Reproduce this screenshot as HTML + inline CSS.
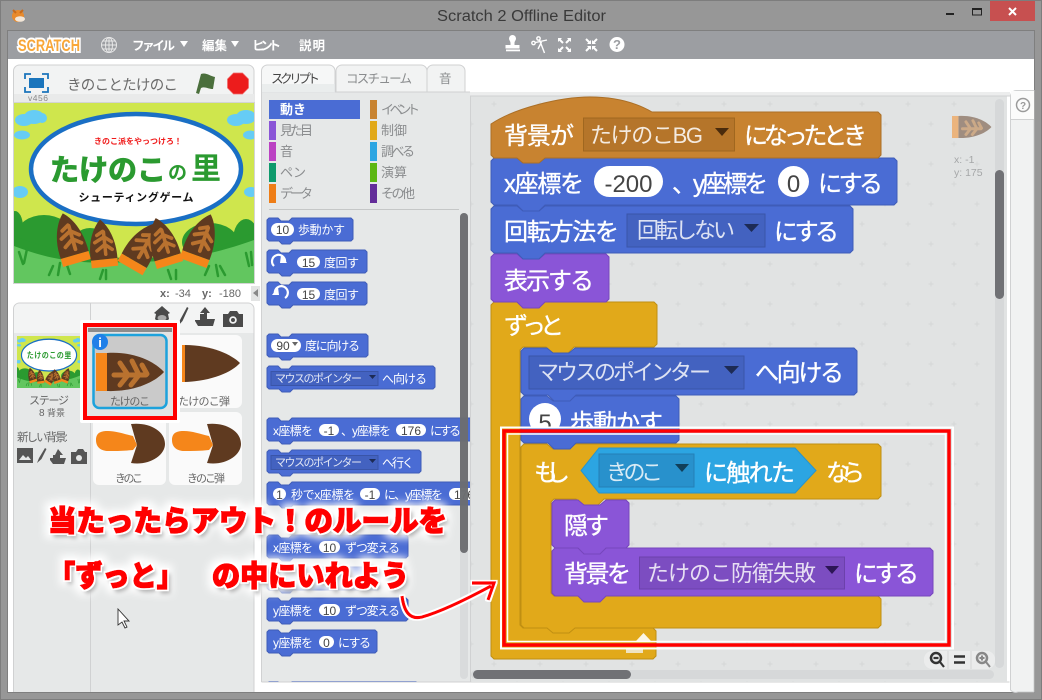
<!DOCTYPE html>
<html lang="ja"><head><meta charset="utf-8"><title>Scratch 2 Offline Editor</title>
<style>
html,body{margin:0;padding:0;background:#979797;width:1042px;height:700px;overflow:hidden}
svg{display:block;position:absolute;left:0;top:0}
text{font-family:"Liberation Sans","Noto Sans CJK JP",sans-serif}
.w{fill:#fff;font-size:24px;stroke:#fff;stroke-width:.35px}
.d{fill:#fff;font-size:22px;opacity:.82}
.n{fill:#444;font-size:24px;text-anchor:middle}
.p{fill:#fff;font-size:12px}
.pn{fill:#444;font-size:12px;text-anchor:middle}
.c{fill:#8a8c8e;font-size:13px}
.l{fill:#666;font-size:11px;text-anchor:middle}
.m{fill:#fff;font-size:12.5px;font-weight:bold}
.big{fill:#f00;font-size:29px;font-weight:900;stroke:#f00;stroke-width:1.4px;filter:url(#glow)}
.mo{fill:#4a6cd4;stroke:#3f5cb8;stroke-width:1}
.lo{fill:#8a55d7;stroke:#7646bc;stroke-width:1}
.co{fill:#e1a91a;stroke:#c08f12;stroke-width:1}
.ev{fill:#c88330;stroke:#ab6f26;stroke-width:1}
</style></head><body>
<svg width="1042" height="700" viewBox="0 0 1042 700" xmlns="http://www.w3.org/2000/svg">
<defs>
<pattern id="plus" x="494" y="104" width="46" height="40" patternUnits="userSpaceOnUse">
<path d="M0 -2.5V2.5M-2.5 0H2.5M46 -2.5V2.5M43.5 0H48.500M23 17.500V22.500M20.500 20H25.500M0 37.500V42.500M-2.500 40H2.500M46 37.500V42.500M43.500 40H48.500" stroke="#d5d7d7" stroke-width="1" fill="none"/>
</pattern>
<filter id="glow" x="-10%" y="-80%" width="120%" height="260%">
<feMorphology in="SourceAlpha" operator="dilate" radius="5" result="a"/>
<feGaussianBlur in="a" stdDeviation="4" result="b"/>
<feFlood flood-color="#fff" flood-opacity=".97"/><feComposite in2="b" operator="in" result="c"/>
<feOffset in="SourceAlpha" dx="3" dy="4" result="so"/>
<feGaussianBlur in="so" stdDeviation="2" result="sb"/>
<feFlood flood-color="#777" flood-opacity=".7"/><feComposite in2="sb" operator="in" result="sc"/>
<feMorphology in="SourceAlpha" operator="dilate" radius="1.6" result="e"/>
<feFlood flood-color="#fff"/><feComposite in2="e" operator="in" result="f"/>
<feMerge><feMergeNode in="c"/><feMergeNode in="sc"/><feMergeNode in="f"/><feMergeNode in="SourceGraphic"/></feMerge>
</filter>
<filter id="ws" x="-10%" y="-30%" width="120%" height="160%">
<feMorphology in="SourceAlpha" operator="dilate" radius="1.5" result="e"/>
<feFlood flood-color="#fff"/><feComposite in2="e" operator="in" result="f"/>
<feMerge><feMergeNode in="f"/><feMergeNode in="SourceGraphic"/></feMerge>
</filter>
<clipPath id="stg"><rect x="14" y="103" width="240" height="180"/></clipPath>
<clipPath id="pal"><rect x="262" y="212" width="208" height="470"/></clipPath>
<clipPath id="cut5"><rect x="521" y="396" width="160" height="31"/></clipPath>
<g id="tk">
<path d="M11 -19C40 -21 60 -9 68 0C60 9 40 20 11 19Z" fill="#5f3a20"/>
<path d="M0 -19H11V19H0Z" fill="#f5861a"/>
<path d="M18 3H50M24 -9L32 3L24 13M36 -11L43 3L35 13M46 -7L51 2" stroke="#b9722f" stroke-width="5" fill="none" stroke-linecap="round" stroke-linejoin="round"/>
</g>
<g id="scene">
<rect x="14" y="103" width="240" height="180" fill="#cfe64d"/>
<g fill="#66ccf5">
<ellipse cx="24" cy="120" rx="9" ry="6"/><ellipse cx="34" cy="117" rx="10" ry="7"/><ellipse cx="42" cy="118" rx="5" ry="5"/>
<ellipse cx="22" cy="135" rx="8" ry="4.500"/>
<ellipse cx="236" cy="120" rx="9" ry="6"/><ellipse cx="246" cy="117" rx="10" ry="7"/>
<ellipse cx="250" cy="135" rx="7" ry="4.500"/>
<ellipse cx="20" cy="192" rx="8" ry="6"/><ellipse cx="251" cy="192" rx="7" ry="5"/>
</g>
<g fill="#2b9a30">
<ellipse cx="15" cy="227" rx="8" ry="16"/><ellipse cx="44" cy="234" rx="27" ry="19"/><ellipse cx="90" cy="246" rx="19" ry="18"/>
<ellipse cx="210" cy="242" rx="28" ry="19"/><ellipse cx="246" cy="240" rx="13" ry="21"/>
<path d="M14 236Q134 290 254 232V283H14Z"/>
</g>
<path d="M14 236Q120 278 254 240V283H14Z" fill="#2b9a30"/>
<path d="M14 246C70 268 110 262 134 262C170 262 210 256 254 240V283H14Z" fill="#62c65f"/>
<path d="M19 252l4 12M27 249l-3 14M53 266l-4 9M60 263l-2 12M67 265l3 9M103 270l-3 9M106 270v9M168 270l3 9M176 270v9M209 266l-4 9M216 265l2 11M220 266l5 9M246 253l3 13M251 252l1 13" stroke="#2b9a30" stroke-width="2.500" stroke-linecap="round" fill="none"/>
<ellipse cx="136" cy="169" rx="105" ry="55" fill="#fff" stroke="#1a6fc4" stroke-width="4.500"/>
<use href="#tk" transform="translate(77,263) rotate(-106) scale(.76)"/>
<use href="#tk" transform="translate(105,267) rotate(-96) scale(.7)"/>
<use href="#tk" transform="translate(130,268) rotate(-60) scale(.76)"/>
<use href="#tk" transform="translate(170,265) rotate(-107) scale(.72)"/>
<use href="#tk" transform="translate(193,263) rotate(-70) scale(.76)"/>
</g>
</defs>

<!-- window -->
<rect width="1042" height="700" fill="#979797"/>
<rect x="0.500" y="0.500" width="1041" height="699" fill="none" stroke="#7d7d7d"/>
<text x="437" y="21" font-size="15.500" fill="#3a3a3a" textLength="169" lengthAdjust="spacingAndGlyphs">Scratch 2 Offline Editor</text>
<circle cx="18" cy="16" r="6" fill="#e88a2c"/><path d="M13 10l3 3M23 10l-3 3" stroke="#c86a1a" stroke-width="2"/><ellipse cx="20" cy="19" rx="5" ry="2.800" fill="#f3e7d8"/>
<rect x="946" y="13" width="8" height="2" fill="#222"/>
<rect x="972.500" y="8.500" width="9" height="6.500" fill="none" stroke="#222"/><rect x="972" y="8" width="10" height="2" fill="#222"/>
<rect x="990" y="1" width="45" height="20" fill="#c75050"/>
<path d="M1009 8l7 7M1016 8l-7 7" stroke="#fff" stroke-width="2"/>

<!-- content -->
<rect x="8" y="31" width="1026" height="661" fill="#fff"/>
<rect x="7.500" y="30.500" width="1027" height="662" fill="none" stroke="#7f7f7f"/>
<rect x="8" y="31" width="1026" height="28" fill="#9c9ea2"/>
<text x="18" y="51" font-size="17" font-weight="bold" fill="#f9a738" stroke="#fff" stroke-width="4" paint-order="stroke" textLength="62" lengthAdjust="spacingAndGlyphs">SCRATCH</text>
<g fill="none" stroke="#e8e8e8" stroke-width="1"><circle cx="109" cy="45" r="7.500"/><ellipse cx="109" cy="45" rx="3.500" ry="7.500"/><path d="M101.500 45h15M102.500 41h13M102.500 49h13M109 37.500v15"/></g>
<text class="m" x="132" y="50" textLength="43">ファイル</text><path d="M180 41h8l-4 6z" fill="#fff"/>
<text class="m" x="202" y="50" textLength="25">編集</text><path d="M231 41h8l-4 6z" fill="#fff"/>
<text class="m" x="252" y="50" textLength="29">ヒント</text>
<text class="m" x="299" y="50" textLength="26">説明</text>
<!-- header tools -->
<g fill="#fff">
<path d="M509 38.500a3.500 3.500 0 0 1 7 0c0 2-1.500 2.500-1.500 4.500v2h5v3.500h-14V45h5v-2c0-2-1.500-2.500-1.500-4.500z"/><rect x="506" y="49.500" width="14" height="1.800"/>
</g>
<g stroke="#fff" fill="none" stroke-width="1.400"><path d="M535.500 42.500L547 40M539.500 40L544.500 53M541.500 42L538 49"/><circle cx="533.500" cy="43" r="1.700"/><circle cx="538.500" cy="38.500" r="1.700"/></g>
<g stroke="#fff" stroke-width="2" fill="#fff">
<path d="M559 39l4 4M570 39l-4 4M559 51l4-4M570 51l-4-4" fill="none"/><path d="M558 38h4l-4 4zM571 38h-4l4 4zM558 52h4l-4-4zM571 52h-4l4-4z" stroke="none"/>
<path d="M586 39l4 4M597 39l-4 4M586 51l4-4M597 51l-4-4" fill="none"/><path d="M591 44h-4l4-4zM592 44h4l-4-4zM591 46h-4l4 4zM592 46h4l-4 4z" stroke="none"/>
</g>
<circle cx="617" cy="44.500" r="7.500" fill="#fff"/><text x="617" y="49" font-size="13" font-weight="bold" fill="#9c9ea2" text-anchor="middle">?</text>

<!-- stage header -->
<path d="M13.500 103V71a6 6 0 0 1 6-6H248a6 6 0 0 1 6 6V103" fill="#f2f3f3" stroke="#d0d1d2"/>
<rect x="14" y="94" width="240" height="9" fill="#e9eaea"/>
<rect x="29" y="78" width="15" height="10" fill="#1b75bc"/>
<path d="M31 74h-6v5M42 74h6v5M31 92h-6v-5M42 92h6v-5" fill="none" stroke="#1b75bc" stroke-width="1.800"/>
<text x="28" y="101" font-size="8.500" fill="#888" textLength="20">v456</text>
<text x="67" y="90" font-size="14.500" fill="#6b6b6b" textLength="111">きのことたけのこ</text>
<path d="M196 93l5-19c5-2 9 2 14 3l-2 12c-5 0-8-3-12-1l-2 6z" fill="#4b6f3c"/>
<path d="M233.500 73h9l6 6v9l-6 6h-9l-6-6v-9z" fill="#ec1c1c" stroke="#f06a6a" stroke-width=".7"/>
<use href="#scene" clip-path="url(#stg)"/>
<text x="138" y="144" font-size="8" font-weight="bold" fill="#f01818" text-anchor="middle" textLength="88">きのこ派をやっつけろ！</text>
<text x="50" y="180" font-size="29" font-weight="bold" fill="#2b9a30" stroke="#2b9a30" stroke-width="1" textLength="116" lengthAdjust="spacingAndGlyphs">たけのこ</text>
<text x="168" y="179" font-size="19" font-weight="bold" fill="#2b9a30">の</text>
<text x="191" y="179" font-size="30" font-weight="bold" fill="#2b9a30">里</text>
<text x="136" y="201" font-size="11" font-weight="bold" fill="#111" text-anchor="middle" textLength="115">シューティングゲーム</text>
<rect x="13.500" y="102.500" width="241" height="181" fill="none" stroke="#d3d4d4"/>
<text x="160" y="297" font-size="11" font-weight="bold" fill="#666">x:</text><text x="175" y="297" font-size="11" fill="#666">-34</text>
<text x="202" y="297" font-size="11" font-weight="bold" fill="#666">y:</text><text x="219" y="297" font-size="11" fill="#666">-180</text>
<rect x="251" y="286" width="9" height="15" fill="#e3e4e4"/><path d="M258 289v8l-5-4z" fill="#888"/>

<!-- sprites panel -->
<path d="M13.500 692V309a6 6 0 0 1 6-6H248a6 6 0 0 1 6 6V692" fill="#e6e8e8" stroke="#d0d1d2"/>
<path d="M14 333V309a5.500 5.500 0 0 1 5.500-5.500H248a5.500 5.500 0 0 1 5.500 5.500V333Z" fill="#f3f4f4"/>
<rect x="90" y="303" width="1" height="389" fill="#d0d1d2"/>
<g fill="#4a4a4a">
<path d="M162 306l8 7-2 1 1 5-4 4h-6l-4-4 1-5-2-1z"/><ellipse cx="162" cy="318" rx="4.500" ry="3" fill="#a9a9a9"/>
<path d="M178 326l2-6 7-13 1.500 1-6 13z"/>
<path d="M197 320h3v-6h4v-1h-4l5-6 5 6h-3v6h8l-2 7h-15l-3-5v-1z"/>
<path d="M223 314h5l2-3h7l2 3h4v13h-20z"/><circle cx="233" cy="320" r="3.800" fill="#f3f4f4"/><circle cx="233" cy="320" r="2"/>
</g>
<!-- stage thumb -->
<g transform="translate(17,336)">
<rect width="63" height="52" fill="#fff"/>
<g transform="scale(.2625 .289) translate(-14 -103)"><use href="#scene" clip-path="url(#stg)"/>
<text x="51" y="179" font-size="27" font-weight="bold" fill="#2b9a30" textLength="170">たけのこの里</text></g>
</g>
<text class="l" x="49" y="404" fill="#666" font-size="12" textLength="40">ステージ</text>
<text x="39" y="416" font-size="10" fill="#666">8</text><text x="47" y="416" font-size="9" fill="#666" textLength="18" lengthAdjust="spacingAndGlyphs">背景</text>
<text x="17" y="441" font-size="11.500" fill="#666" textLength="51">新しい背景:</text>
<g fill="#555">
<path d="M17 448h16v15H17zM19 460l4-5 3 3 2-2 3 4z" fill-rule="evenodd"/>
<path d="M37 463l2-5 6-10 1.500 1-5 10z"/>
<path d="M50 458h3v-3h2l3-6 5 6h-3v3h6l-2 6H53l-3-4z"/>
<path d="M71 452h5l2-3h5l2 3h2v12H71z"/><circle cx="79" cy="458" r="3" fill="#e6e8e8"/>
</g>
<!-- sprite thumbs -->
<rect x="169" y="335" width="73" height="73" rx="6" fill="#fafafa"/>
<rect x="93" y="412" width="73" height="73" rx="6" fill="#fafafa"/>
<rect x="169" y="412" width="73" height="73" rx="6" fill="#fafafa"/>
<path d="M185 345C212 345 232 355 240 363C232 372 212 381 185 382Z" fill="#5f3a20"/><rect x="182" y="345" width="3" height="37" fill="#f5861a"/>
<text class="l" x="204" y="405" font-size="12" textLength="52">たけのこ弾</text>
<g id="ki"><path d="M96 440C96 432 102 431 108 431C116 431 124 434 133 436L137 445L133 450C124 451 116 451 108 451C102 451 96 448 96 440Z" fill="#f5861a"/>
<path d="M131 424C148 422 165 430 165 444C165 456 148 466 131 463L137 445Z" fill="#5f3a20"/></g>
<use href="#ki" x="76"/>
<text class="l" x="129" y="482" font-size="12" textLength="28">きのこ</text>
<text class="l" x="206" y="482" font-size="12" textLength="38">きのこ弾</text>
<!-- highlighted sprite -->
<rect x="80" y="320" width="100" height="103" fill="#fff" rx="2"/>
<rect x="85" y="325" width="90" height="93" fill="#e2e3e3" stroke="#f00" stroke-width="4"/>
<rect x="88" y="328" width="84" height="4" fill="#8c8c8c"/>
<rect x="93.500" y="335" width="73" height="73" rx="6" fill="#cacaca" stroke="#1da2dc" stroke-width="2.500"/>
<use href="#tk" transform="translate(96,372)"/>
<circle cx="100" cy="342" r="8" fill="#1f7fe8"/><text x="100" y="347" font-size="13" font-weight="bold" fill="#fff" text-anchor="middle">i</text>
<text class="l" x="130" y="405" font-size="12" textLength="40">たけのこ</text>

<!-- tabs and palette -->
<rect x="261" y="92" width="210" height="590" fill="#e6e8e8"/>
<path d="M261.500 682V92H470" fill="none" stroke="#d0d1d2"/>
<rect x="261.500" y="681.500" width="748" height="1" fill="#d0d1d2"/>
<path d="M336 92V71a6 6 0 0 1 6-6h79a6 6 0 0 1 6 6V92Z" fill="#f2f3f3" stroke="#d0d1d2"/>
<path d="M427 92V71a6 6 0 0 1 6-6h26a6 6 0 0 1 6 6V92Z" fill="#f2f3f3" stroke="#d0d1d2"/>
<path d="M261.500 92V71a6 6 0 0 1 6-6H329a6 6 0 0 1 6 6V92" fill="#f6f7f7" stroke="#d0d1d2"/>
<rect x="262" y="84" width="73" height="12" fill="#e6e8e8" opacity=".7"/>
<text x="271" y="83" font-size="12.500" fill="#444" textLength="49">スクリプト</text>
<text x="346" y="83" font-size="12.500" fill="#8a8c8e" textLength="66">コスチューム</text>
<text x="439" y="83" font-size="12.500" fill="#8a8c8e">音</text>
<rect x="269" y="100" width="91" height="19" fill="#4a6cd4"/><text x="280" y="114" font-size="13" font-weight="bold" fill="#fff">動き</text>
<rect x="269" y="121" width="7" height="19" fill="#8a55d7"/><text class="c" x="280" y="135" textLength="33">見た目</text>
<rect x="269" y="142" width="7" height="19" fill="#bb42c3"/><text class="c" x="280" y="156">音</text>
<rect x="269" y="163" width="7" height="19" fill="#0e9a6c"/><text class="c" x="280" y="177">ペン</text>
<rect x="269" y="184" width="7" height="19" fill="#ee7d16"/><text class="c" x="280" y="198" textLength="33">データ</text>
<rect x="370" y="100" width="7" height="19" fill="#c88330"/><text class="c" x="381" y="114" textLength="39">イベント</text>
<rect x="370" y="121" width="7" height="19" fill="#e1a91a"/><text class="c" x="381" y="135">制御</text>
<rect x="370" y="142" width="7" height="19" fill="#2ca5e2"/><text class="c" x="381" y="156" textLength="34">調べる</text>
<rect x="370" y="163" width="7" height="19" fill="#5cb712"/><text class="c" x="381" y="177">演算</text>
<rect x="370" y="184" width="7" height="19" fill="#632d99"/><text class="c" x="381" y="198" textLength="34">その他</text>
<rect x="269" y="209" width="190" height="1" fill="#c5c7c7"/>

<g clip-path="url(#pal)">
<g transform="translate(0,218)"><path class="mo" d="M267 2l2-2h9l3 3h8l3-3H351l2 2V21l-2 2H293l-3 3h-8l-3-3H269l-2-2Z"/>
<rect x="271" y="5" width="23" height="13" rx="6.500" fill="#fff"/><text class="pn" x="282.500" y="16">10</text><text class="p" x="298" y="16" textLength="47">歩動かす</text></g>
<g transform="translate(0,250)"><path class="mo" d="M267 2l2-2h9l3 3h8l3-3H365l2 2V21l-2 2H293l-3 3h-8l-3-3H269l-2-2Z"/>
<path d="M274 16a6.500 6.500 0 1 1 11-4" fill="none" stroke="#fff" stroke-width="2.200"/><path d="M281 5l6 8-7 0z" fill="#fff"/>
<rect x="297" y="6" width="23" height="12" rx="6" fill="#fff"/><text class="pn" x="308.500" y="17">15</text><text class="p" x="324" y="17" textLength="35">度回す</text></g>
<g transform="translate(0,282)"><path class="mo" d="M267 2l2-2h9l3 3h8l3-3H365l2 2V21l-2 2H293l-3 3h-8l-3-3H269l-2-2Z"/>
<path d="M285 16a6.500 6.500 0 1 0-10-4" fill="none" stroke="#fff" stroke-width="2.200"/><path d="M278 5l-6 8 7 0z" fill="#fff"/>
<rect x="297" y="6" width="23" height="12" rx="6" fill="#fff"/><text class="pn" x="308.500" y="17">15</text><text class="p" x="324" y="17" textLength="35">度回す</text></g>
<g transform="translate(0,334)"><path class="mo" d="M267 2l2-2h9l3 3h8l3-3H366l2 2V21l-2 2H293l-3 3h-8l-3-3H269l-2-2Z"/>
<rect x="271" y="5" width="30" height="13" rx="6.500" fill="#fff"/><text class="pn" x="283" y="16">90</text><path d="M292 8h6l-3 4z" fill="#666"/><text class="p" x="305" y="16" textLength="55">度に向ける</text></g>
<g transform="translate(0,366)"><path class="mo" d="M267 2l2-2h9l3 3h8l3-3H433l2 2V21l-2 2H293l-3 3h-8l-3-3H269l-2-2Z"/>
<rect x="271" y="5.500" width="107" height="14" fill="#4362c0" stroke="#3a55a8"/><text x="275" y="16" font-size="11" fill="#fff" opacity=".85" textLength="87">マウスのポインター</text><path d="M369 9h7l-3.500 4z" fill="#1d2b55"/><text class="p" x="382" y="17" textLength="45">へ向ける</text></g>
<g transform="translate(0,418)"><path class="mo" d="M267 2l2-2h9l3 3h8l3-3H500V23H293l-3 3h-8l-3-3H269l-2-2Z"/>
<text class="p" x="273" y="17" textLength="40">x座標を</text><rect x="319" y="6" width="20" height="12" rx="6" fill="#fff"/><text class="pn" x="329" y="17">-1</text><text class="p" x="341" y="17" textLength="50">、y座標を</text><rect x="396" y="6" width="30" height="12" rx="6" fill="#fff"/><text class="pn" x="411" y="17">176</text><text class="p" x="430" y="17" textLength="31">にする</text></g>
<g transform="translate(0,450)"><path class="mo" d="M267 2l2-2h9l3 3h8l3-3H419l2 2V21l-2 2H293l-3 3h-8l-3-3H269l-2-2Z"/>
<rect x="271" y="5.500" width="107" height="14" fill="#4362c0" stroke="#3a55a8"/><text x="275" y="16" font-size="11" fill="#fff" opacity=".85" textLength="87">マウスのポインター</text><path d="M369 9h7l-3.500 4z" fill="#1d2b55"/><text class="p" x="382" y="17" textLength="32">へ行く</text></g>
<g transform="translate(0,482)"><path class="mo" d="M267 2l2-2h9l3 3h8l3-3H500V23H293l-3 3h-8l-3-3H269l-2-2Z"/>
<rect x="273" y="6" width="13" height="12" rx="6" fill="#fff"/><text class="pn" x="279.500" y="17">1</text><text class="p" x="291" y="17" textLength="64">秒でx座標を</text><rect x="360" y="6" width="20" height="12" rx="6" fill="#fff"/><text class="pn" x="370" y="17">-1</text><text class="p" x="384" y="17" textLength="59">に、y座標を</text><rect x="449" y="6" width="30" height="12" rx="6" fill="#fff"/><text class="pn" x="464" y="17">176</text></g>
<g transform="translate(0,535)"><path class="mo" d="M267 2l2-2h9l3 3h8l3-3H406l2 2V21l-2 2H293l-3 3h-8l-3-3H269l-2-2Z"/>
<text class="p" x="273" y="17" textLength="40">x座標を</text><rect x="319" y="6" width="21" height="12" rx="6" fill="#fff"/><text class="pn" x="329.500" y="17">10</text><text class="p" x="345" y="17" textLength="55">ずつ変える</text></g>
<g transform="translate(0,567)"><path class="mo" d="M267 2l2-2h9l3 3h8l3-3H378l2 2V21l-2 2H293l-3 3h-8l-3-3H269l-2-2Z"/></g>
<g transform="translate(0,598)"><path class="mo" d="M267 2l2-2h9l3 3h8l3-3H406l2 2V21l-2 2H293l-3 3h-8l-3-3H269l-2-2Z"/>
<text class="p" x="273" y="17" textLength="40">y座標を</text><rect x="319" y="6" width="21" height="12" rx="6" fill="#fff"/><text class="pn" x="329.500" y="17">10</text><text class="p" x="345" y="17" textLength="55">ずつ変える</text></g>
<g transform="translate(0,630)"><path class="mo" d="M267 2l2-2h9l3 3h8l3-3H375l2 2V21l-2 2H293l-3 3h-8l-3-3H269l-2-2Z"/>
<text class="p" x="273" y="17" textLength="40">y座標を</text><rect x="319" y="6" width="15" height="12" rx="6" fill="#fff"/><text class="pn" x="326.500" y="17">0</text><text class="p" x="338" y="17" textLength="33">にする</text></g>
<g transform="translate(0,682)"><path class="mo" d="M267 2l2-2h9l3 3h8l3-3H416l2 2V21H267Z"/></g>
</g>
<rect x="460" y="213" width="8" height="466" rx="4" fill="#d6d8d9" opacity=".85"/>
<rect x="460" y="213" width="8" height="340" rx="4" fill="#55565a" opacity=".8"/>

<!-- scripts area -->
<rect x="471" y="96" width="536" height="586" fill="#e1e3e3"/>
<rect x="471" y="96" width="536" height="586" fill="url(#plus)"/>
<path d="M470.500 92V682" stroke="#d0d1d2" fill="none"/>
<rect x="470" y="92" width="540" height="4" fill="#eceded"/><rect x="470" y="95.500" width="540" height="1" fill="#d0d1d2"/>
<path d="M1010.500 690V96a6 6 0 0 1 6-5.500H1034V692H1018a7 7 0 0 1-7.500-2z" fill="#f1f2f2" stroke="#d0d1d2"/>
<rect x="1011" y="119" width="23" height="1" fill="#d0d1d2"/>
<rect x="1011" y="91" width="23" height="28" fill="#fbfbfb"/>
<circle cx="1023" cy="105" r="6.500" fill="none" stroke="#9a9a9a" stroke-width="1.500"/><text x="1023" y="109" font-size="10" font-weight="bold" fill="#9a9a9a" text-anchor="middle">?</text>
<rect x="995" y="99" width="9" height="569" rx="4.500" fill="#d6d8d9"/>
<rect x="995" y="170" width="9" height="129" rx="4.500" fill="#707175"/>
<rect x="471" y="670" width="523" height="9" rx="4.500" fill="#d6d8d9"/>
<rect x="473" y="670" width="158" height="9" rx="4.500" fill="#707175"/>
<use href="#tk" transform="translate(952,127) scale(.58)" opacity=".5"/>
<text x="954" y="163" font-size="10.500" fill="#a5a7a8">x:  -1</text>
<text x="954" y="176" font-size="10.500" fill="#a5a7a8">y:  175</text>

<!-- script: painted bottom to top -->
<path class="co" d="M491 305l3-3h23l6 5h16l6-5H654l3 3V344l-3 3H574l-6 6h-16l-6-6H523l-3 3V625l3 3H653l3 3V656l-3 3H494l-3-3Z"/>
<text class="w" x="504" y="334" textLength="60">ずっと</text>
<rect x="626" y="648" width="17" height="5" fill="#efe3c0"/>
<path class="co" d="M521 447l3-3h23l6 5h16l6-5H878l3 3V496l-3 3H604l-6 6h-16l-6-6H554l-3 3V593l3 3H878l3 3V625l-3 3H575l-6 5h-16l-6-5H524l-3-3Z"/>
<path d="M636 641L643.500 633L651 641Z" fill="#fbf6e6"/>
<text class="w" x="534" y="481" textLength="36">もし</text>
<path d="M581 470.500L599 448H795L816 470.500L795 493H599Z" fill="#2ca5e2" stroke="#2794cc"/>
<rect x="599" y="454" width="95" height="33" fill="#2891cc" stroke="#2380b6"/>
<text class="d" x="606" y="480" textLength="57">きのこ</text><path d="M675 464h14l-7 8z" fill="#113f5a"/>
<text class="w" x="704" y="481" textLength="91">に触れた</text>
<text class="w" x="826" y="481" textLength="39">なら</text>
<path class="lo" d="M552 551l3-3h23l6 5h16l6-5H930l3 3V593l-3 3H606l-6 6h-16l-6-6H555l-3-3Z"/>
<text class="w" x="564" y="582" textLength="67">背景を</text>
<rect x="639.500" y="557" width="205" height="32" fill="#7c4dc1" stroke="#6c41ab"/>
<text class="d" x="647" y="581" textLength="169">たけのこ防衛失敗</text><path d="M825 566h14l-7 8z" fill="#2d1656"/>
<text class="w" x="854" y="582" textLength="65">にする</text>
<path class="lo" d="M552 503l3-3h23l6 5h16l6-5H626l3 3V545l-3 3H606l-6 6h-16l-6-6H555l-3-3Z"/>
<text class="w" x="564" y="534" textLength="45">隠す</text>
<path class="mo" d="M521 399l3-3h23l6 5h16l6-5H676l3 3V440l-3 3H576l-6 6h-16l-6-6H524l-3-3Z"/>
<g clip-path="url(#cut5)">
<circle cx="545" cy="419" r="16" fill="#fff"/><text class="n" x="545" y="431">5</text>
<text class="w" x="570" y="431" textLength="93">歩動かす</text>
</g>
<path class="mo" d="M521 351l3-3h23l6 5h16l6-5H854l3 3V392l-3 3H576l-6 6h-16l-6-6H524l-3-3Z"/>
<rect x="529" y="356" width="215" height="33" fill="#4362c0" stroke="#3a55a8"/>
<text class="d" x="537" y="380" textLength="174">マウスのポインター</text><path d="M724 366h15l-7.500 8z" fill="#1d2b55"/>
<text class="w" x="755" y="381" textLength="89">へ向ける</text>
<path class="lo" d="M491 257l3-3h23l6 5h16l6-5H606l3 3V299l-3 3H545l-6 6h-16l-6-6H494l-3-3Z"/>
<text class="w" x="504" y="289" textLength="90">表示する</text>
<path class="mo" d="M491 209l3-3h23l6 5h16l6-5H850l3 3V250l-3 3H545l-6 6h-16l-6-6H494l-3-3Z"/>
<text class="w" x="504" y="240" textLength="115">回転方法を</text>
<rect x="627" y="214" width="138" height="33" fill="#4362c0" stroke="#3a55a8"/>
<text class="d" x="637" y="238" textLength="98">回転しない</text><path d="M744 224h15l-7.500 8z" fill="#1d2b55"/>
<text class="w" x="774" y="240" textLength="65">にする</text>
<path class="mo" d="M491 161l3-3h23l6 5h16l6-5H894l3 3V202l-3 3H545l-6 6h-16l-6-6H494l-3-3Z"/>
<text class="w" x="504" y="192" textLength="80">x座標を</text>
<rect x="594" y="166" width="69" height="31" rx="15.500" fill="#fff"/><text class="n" x="628.500" y="192">-200</text>
<text class="w" x="672" y="192" textLength="96">、y座標を</text>
<circle cx="793.500" cy="181.500" r="15.500" fill="#fff"/><text class="n" x="793.500" y="192">0</text>
<text class="w" x="818" y="192" textLength="65">にする</text>
<path class="ev" d="M491 155V124C515 108 560 97 590 97C620 97 640 105 652 112H878l3 3V155l-3 3H545l-6 5h-16l-6-5H494Z"/>
<text class="w" x="504" y="144" textLength="70">背景が</text>
<rect x="583.500" y="118" width="151" height="33" fill="#b5752a" stroke="#a0671f"/>
<text x="590" y="143" font-size="22" fill="#fff" opacity=".85" textLength="113">たけのこBG</text><path d="M715 128h14l-7 8z" fill="#4a2b0c"/>
<text class="w" x="744" y="144" textLength="123">になったとき</text>

<!-- zoom controls -->
<rect x="924" y="651" width="71" height="18" rx="8" fill="#ebecec"/>
<path d="M948 651v18M971 651v18" stroke="#d6d6d6"/>
<circle cx="936" cy="658" r="5" fill="none" stroke="#333" stroke-width="2.500"/><path d="M933.500 658h5M940 662l4 5" stroke="#333" stroke-width="2.200"/>
<path d="M954 656.500h11M954 662.500h11" stroke="#333" stroke-width="2.500"/>
<circle cx="982" cy="658" r="5" fill="none" stroke="#888" stroke-width="2.500"/><path d="M979.500 658h5M982 655.500v5M986 662l4 5" stroke="#888" stroke-width="2"/>

<!-- red highlight box -->
<rect x="501" y="427.500" width="452" height="221" fill="none" stroke="#fff" stroke-width="2"/>
<rect x="504" y="431" width="445" height="214" fill="none" stroke="#f00" stroke-width="3.500"/>
<rect x="507.500" y="434" width="438" height="207.500" fill="none" stroke="#fff" stroke-width="1.500"/>

<!-- overlay -->
<text class="big" x="48" y="531" textLength="399" lengthAdjust="spacingAndGlyphs">当たったらアウト！のルールを</text>
<text class="big" x="48" y="586" textLength="136" lengthAdjust="spacingAndGlyphs">「ずっと」</text>
<text class="big" x="212" y="586" textLength="197" lengthAdjust="spacingAndGlyphs">の中にいれよう</text>
<g filter="url(#ws)"><path d="M402 596C404 612 410 620 422 617C440 612 465 600 491 586M472 583L494 583L488 600" fill="none" stroke="#f00" stroke-width="3.200"/></g>
<path d="M118 609v16l4-3 3 6 2-1-3-6h5z" fill="#fff" stroke="#333" stroke-width=".9"/>
</svg>
</body></html>
